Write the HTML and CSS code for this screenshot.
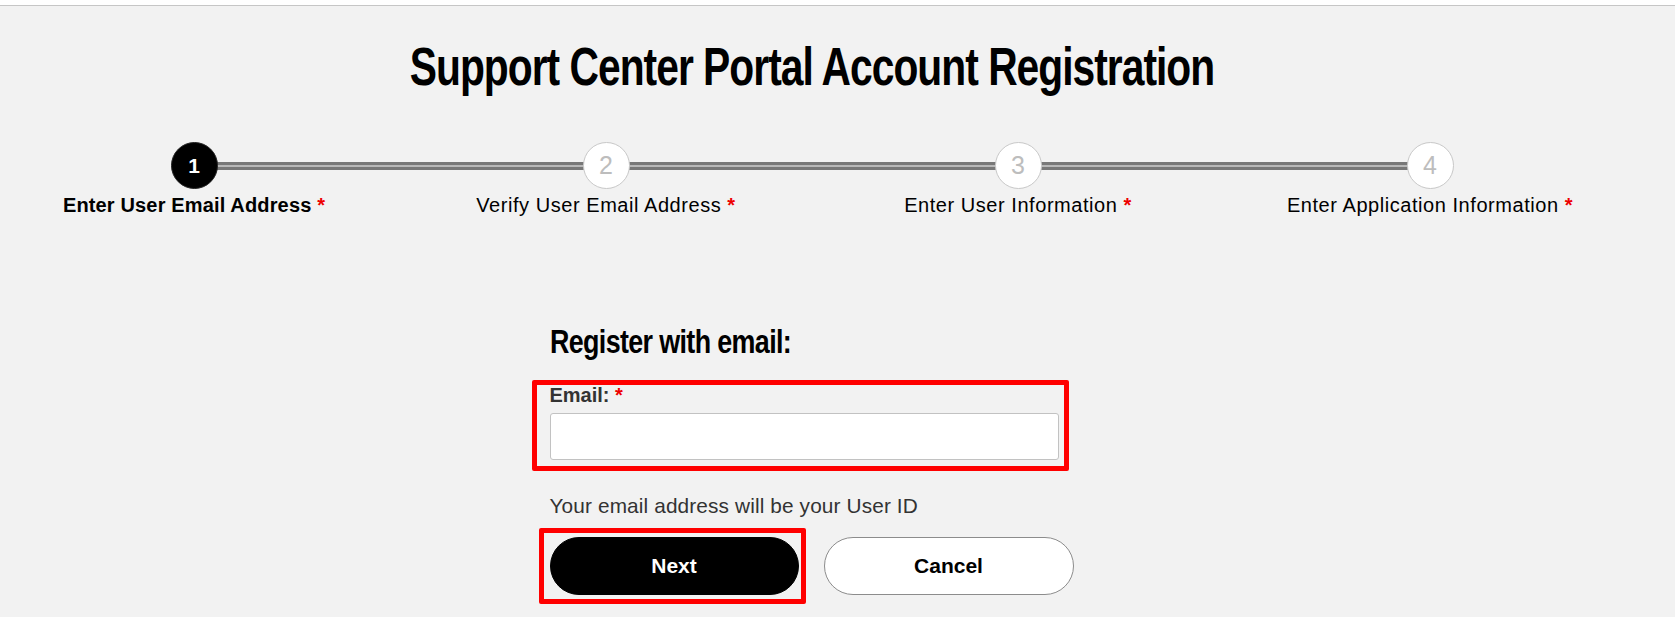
FILE: index.html
```html
<!DOCTYPE html>
<html lang="en">
<head>
<meta charset="utf-8">
<title>Support Center Portal Account Registration</title>
<link rel="stylesheet" href="styles.css">
</head>
<body>
<div class="topbar"></div>
<main class="page">
  <div class="container">
    <h1 class="title">Support Center Portal Account Registration</h1>
    <ol class="stepper">
      <li class="step active"><span class="dot">1</span><span class="step-label">Enter User Email Address <span class="req">*</span></span></li>
      <li class="step"><span class="dot">2</span><span class="step-label">Verify User Email Address <span class="req">*</span></span></li>
      <li class="step"><span class="dot">3</span><span class="step-label">Enter User Information <span class="req">*</span></span></li>
      <li class="step last"><span class="dot">4</span><span class="step-label">Enter Application Information <span class="req">*</span></span></li>
    </ol>
    <section class="form">
      <h2 class="form-title">Register with email:</h2>
      <div class="field">
        <label class="field-label" for="email">Email: <span class="req">*</span></label>
        <input class="field-input" id="email" type="email">
        <span class="annot annot-field"></span>
      </div>
      <p class="hint">Your email address will be your User ID</p>
      <div class="actions">
        <div class="btn-wrap">
          <button class="btn btn-primary" type="button">Next</button>
          <span class="annot annot-next"></span>
        </div>
        <button class="btn btn-secondary" type="button">Cancel</button>
      </div>
    </section>
  </div>
</main>
</body>
</html>
```
FILE: styles.css
```css
* { box-sizing: border-box; }

html, body {
  margin: 0;
  padding: 0;
  background: #ffffff;
  font-family: "Liberation Sans", Arial, sans-serif;
  color: #000;
}

.topbar {
  height: 5px;
  background: #ffffff;
}

.page {
  background: #f2f2f2;
  border-top: 1px solid #c6c6c6;
  min-height: calc(100vh - 5px);
  overflow: hidden;
}

.container {
  width: 1624px;
}

.title {
  margin: 31px 0 0;
  font-family: "Liberation Sans", Arial, sans-serif;
  font-weight: 700;
  font-size: 53px;
  line-height: 60px;
  letter-spacing: -1.3px;
  text-align: center;
  color: #000;
  transform: scaleX(0.77);
  transform-origin: 50% 50%;
}

.stepper {
  list-style: none;
  margin: 45px 0 0 -12px;
  padding: 0;
  width: 1648px;
  display: grid;
  grid-template-columns: repeat(4, 412px);
}

.step {
  position: relative;
  display: flex;
  flex-direction: column;
  align-items: center;
}

.step::after {
  content: "";
  position: absolute;
  left: 50%;
  width: 100%;
  top: 20px;
  height: 8px;
  background: linear-gradient(#787878 0 3px, #b8b8b8 3px 5px, #787878 5px 8px);
  z-index: 0;
}

.step.last::after { display: none; }

.dot {
  position: relative;
  z-index: 1;
  width: 47px;
  height: 47px;
  border-radius: 50%;
  border: 1px solid #c8c8c8;
  background: #ffffff;
  color: #bdbdbd;
  font-size: 25px;
  display: flex;
  align-items: center;
  justify-content: center;
  line-height: 1;
}

.step.active .dot {
  background: #000;
  border-color: #222;
  color: #fff;
  font-weight: 700;
  font-size: 21px;
}

.step-label {
  margin-top: 4px;
  font-size: 20px;
  line-height: 24px;
  letter-spacing: 0.55px;
  white-space: nowrap;
  color: #000;
}

.step.active .step-label {
  font-weight: 700;
  letter-spacing: 0.15px;
}

.req {
  color: #ee0000;
  font-weight: 700;
}

.form {
  width: 525px;
  margin: 104px auto 0;
}

.form-title {
  margin: 0;
  font-family: "Liberation Sans", Arial, sans-serif;
  font-weight: 700;
  font-size: 34px;
  line-height: 40px;
  letter-spacing: -0.8px;
  color: #000;
  transform: scaleX(0.79);
  transform-origin: 0 50%;
}

.field {
  position: relative;
  margin-top: 22px;
  display: flex;
  flex-direction: column;
}

.field-label {
  font-size: 20px;
  line-height: 24px;
  font-weight: 700;
  color: #333;
}

.field-input {
  margin-top: 6px;
  width: 509px;
  height: 47px;
  border: 1px solid #c2c2c2;
  border-radius: 3px;
  background: #fff;
  font-size: 18px;
  padding: 0 10px;
}

.annot {
  position: absolute;
  border: 5px solid #ff0000;
  border-radius: 2px;
  pointer-events: none;
}

.annot-field {
  left: -18px;
  right: 6px;
  top: -3px;
  bottom: -11px;
}

.hint {
  margin: 34px 0 0;
  font-size: 20.8px;
  line-height: 24px;
  letter-spacing: 0.13px;
  color: #333;
}

.actions {
  margin-top: 19px;
  display: flex;
  gap: 25px;
}

.btn-wrap {
  position: relative;
  display: flex;
}

.annot-next {
  left: -11px;
  right: -7px;
  top: -9px;
  bottom: -9px;
}

.btn {
  width: 250px;
  height: 58px;
  border-radius: 29px;
  font-family: "Liberation Sans", Arial, sans-serif;
  font-size: 21px;
  font-weight: 700;
  cursor: pointer;
}

.btn-primary {
  width: 249px;
  background: #000;
  color: #fff;
  border: 1px solid #000;
}

.btn-secondary {
  background: #fff;
  color: #000;
  border: 1px solid #8c8c8c;
}
```
